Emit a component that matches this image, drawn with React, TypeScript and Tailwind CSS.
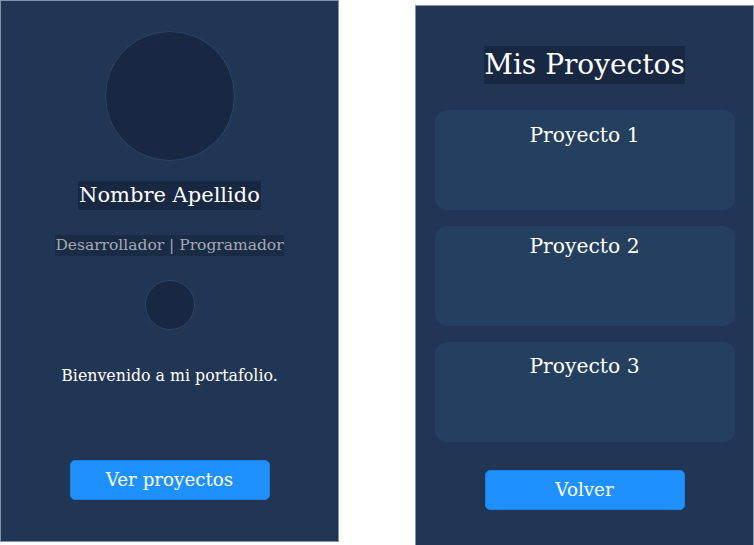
import React from 'react';

const serif = { fontFamily: "'DejaVu Serif', serif" };

function Perfil() {
  return (
    <section className="w-[339px] h-[542px] shrink-0 border border-[#8193a9] bg-[#213654] flex flex-col items-center text-white">
      <div className="mt-[30px] w-[130px] h-[130px] rounded-full bg-[#182843] border border-[#2e4462]" />
      <h2 className="mt-[20px] bg-[#182843] px-px text-[21px] leading-[29px]">Nombre Apellido</h2>
      <p className="mt-[25px] bg-[#1a2b46] text-[15.5px] leading-[21px] text-[#a3a9b3]">Desarrollador | Programador</p>
      <div className="mt-[24px] w-[50px] h-[50px] rounded-full bg-[#182843] border border-[#2e4462]" />
      <p className="mt-[36px] text-[15.8px] leading-[20px]">Bienvenido a mi portafolio.</p>
      <button className="mt-[74px] w-[200px] h-[40px] rounded-[5px] bg-[#1e90ff] border border-[#1f7fdc] text-[18.3px] text-white">
        Ver proyectos
      </button>
    </section>
  );
}

function Proyectos() {
  const items = [
    { name: 'Proyecto 1', pad: 'pt-[13px]' },
    { name: 'Proyecto 2', pad: 'pt-[8px]' },
    { name: 'Proyecto 3', pad: 'pt-[12px]' },
  ];
  return (
    <section className="mt-[5px] w-[339px] h-[545px] shrink-0 border border-[#8193a9] bg-[#213654] flex flex-col items-center text-white">
      <h1 className="mt-[40px] bg-[#182843] text-[28px] leading-[38px]">Mis Proyectos</h1>
      <div className="mt-[26px] w-[300px] flex flex-col gap-[16px]">
        {items.map((p) => (
          <div key={p.name} className={`h-[100px] rounded-[12px] bg-[#253f5f] text-center ${p.pad}`}>
            <h3 className="text-[20.3px] leading-[24px]">{p.name}</h3>
          </div>
        ))}
      </div>
      <button className="mt-[28px] w-[200px] h-[40px] rounded-[5px] bg-[#1e90ff] border border-[#1f7fdc] text-[18.3px] text-white">
        Volver
      </button>
    </section>
  );
}

export default function App() {
  return (
    <div className="w-[754px] h-[545px] overflow-hidden bg-white flex gap-[76px]" style={serif}>
      <Perfil />
      <Proyectos />
    </div>
  );
}
